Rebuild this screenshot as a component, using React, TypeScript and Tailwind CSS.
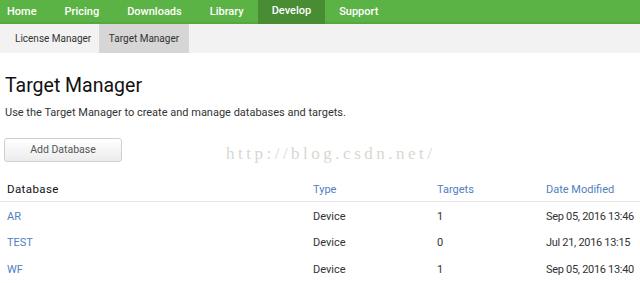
const nav = ["Home", "Pricing", "Downloads", "Library", "Develop", "Support"];

const rows = [
  { name: "AR", type: "Device", targets: "1", date: "Sep 05, 2016 13:46" },
  { name: "TEST", type: "Device", targets: "0", date: "Jul 21, 2016 13:15" },
  { name: "WF", type: "Device", targets: "1", date: "Sep 05, 2016 13:40" },
];

export default function App() {
  return (
    <main className="w-[640px] h-[283px] overflow-hidden bg-white font-['Roboto',sans-serif]">
      <nav className="flex h-6 bg-[#5cb345] border-b-2 border-[#55a83f] text-[11px] font-medium text-white">
        {nav.map((item) => (
          <div
            key={item}
            className={
              "flex items-center -mb-[2px] " +
              (item === "Home" ? "pl-[7px] pr-[14px] " : "px-[14px] ") +
              (item === "Develop" ? "bg-[#488c34] pb-[2px]" : "")
            }
          >
            {item}
          </div>
        ))}
      </nav>
      <div className="flex h-[29px] bg-[#f2f2f2] text-[10px] text-[#333]">
        <div className="flex items-center w-[99px] pl-[15px]">License Manager</div>
        <div className="flex items-center justify-center w-[90px] bg-[#d6d6d6]">Target Manager</div>
      </div>

      <section className="px-[5px]">
        <h1 className="mt-[21px] text-[19.5px] leading-6 text-[#111]">Target Manager</h1>
        <p className="mt-[7px] text-[11px] leading-4 text-[#333]">
          Use the Target Manager to create and manage databases and targets.
        </p>
        <div className="relative mt-[15px] h-[24px]">
          <button className="w-[118px] h-[24px] -ml-[1px] rounded-[3px] border border-[#cfcfcf] bg-gradient-to-b from-white to-[#ececec] text-[10.5px] text-[#555]">
            Add Database
          </button>
          <span className="absolute left-[221px] top-[8px] leading-5 font-['Liberation_Serif',serif] text-[17px] tracking-[3.5px] text-[#d8d8d0]">
            http://blog.csdn.net/
          </span>
        </div>
      </section>

      <table className="mt-[19px] w-[640px] text-[11px] text-[#333]">
        <thead>
          <tr className="h-[22px] border-b border-[#e3e3e3]">
            <th className="pl-[7px] text-left font-normal text-[11.5px] tracking-[0.4px] text-[#111] w-[313px]">Database</th>
            <th className="text-left font-normal text-[#4f80c0] w-[124px]">Type</th>
            <th className="text-left font-normal text-[#4f80c0] w-[109px]">Targets</th>
            <th className="text-left font-normal text-[#4f80c0]">Date Modified</th>
          </tr>
        </thead>
        <tbody>
          {rows.map((r) => (
            <tr key={r.name} className="h-[27px] [&>td]:pt-[4px]">
              <td className="pl-[7px] text-[#4f80c0]">{r.name}</td>
              <td>{r.type}</td>
              <td>{r.targets}</td>
              <td className="whitespace-nowrap tracking-[-0.3px]">{r.date}</td>
            </tr>
          ))}
        </tbody>
      </table>
    </main>
  );
}
